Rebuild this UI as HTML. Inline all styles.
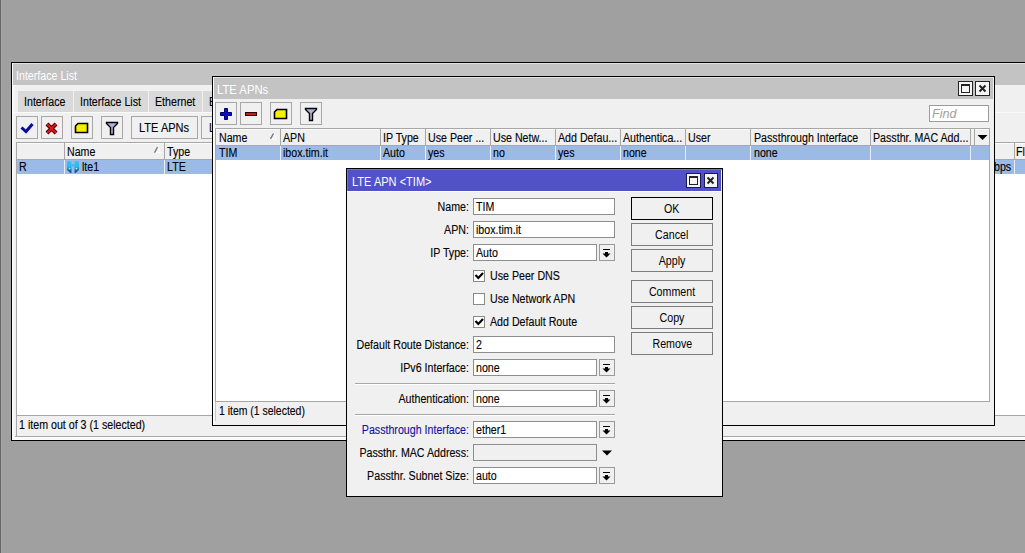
<!DOCTYPE html>
<html><head><meta charset="utf-8">
<style>
*{margin:0;padding:0;box-sizing:border-box}
html,body{width:1025px;height:553px;overflow:hidden}
body{position:relative;background:#a0a0a0;font-family:"Liberation Sans",sans-serif;font-size:11px;color:#000}
.a{position:absolute}
.t{position:absolute;white-space:nowrap;line-height:14px;font-size:12px;-webkit-text-stroke:.12px currentColor;transform:scaleX(.888);transform-origin:0 0}
.w{color:#fff;-webkit-text-stroke:0 !important}
.win{position:absolute;border:1px solid #000;background:#f0f0f0;overflow:hidden}
.tb{position:absolute;background:#c3c3c3}
.btn{position:absolute;border:1px solid #a7a7a7;background:#f0f0f0;width:22px;height:23px}
.tab{position:absolute;background:#d9d9d9;height:21px;top:91px}
.sep{position:absolute;width:1px;background:#a7a7a7}
.sel{position:absolute;background:#9bbbe6}
.inp{position:absolute;border:1px solid #8e8e8e;background:#fff;height:17px}
.dd{position:absolute;border:1px solid #9a9a9a;background:#f0f0f0;width:16px;height:17px}
.lbl{position:absolute;white-space:nowrap;line-height:14px;font-size:12px;-webkit-text-stroke:.12px currentColor;text-align:right;width:200px;left:269px;transform:scaleX(.888);transform-origin:100% 0}
.cb{position:absolute;border:1px solid #8a8a8a;background:#fff;width:12px;height:12px;left:473px}
.db{position:absolute;border:1px solid #7c7c7c;background:#f0f0f0;width:82px;height:23px;left:631px;text-align:center;line-height:22px;font-size:12px}
.db span{display:inline-block;transform:scaleX(.888)}
.tbtn{position:absolute;border:1px solid #222;background:#f4f4f4;width:15px;height:15px}
svg{position:absolute;overflow:visible}
</style></head><body>
<div class="a" style="left:0;top:0;width:1px;height:553px;background:#666"></div>
<div class="a" style="left:1px;top:0;width:1px;height:553px;background:#a8a8a8"></div>

<!-- ============ Interface List ============ -->
<div class="win" style="left:11px;top:62px;width:1100px;height:379px"></div>
<div class="a" style="left:12px;top:63px;width:1100px;height:1px;background:#e2e2e2"></div>
<div class="a" style="left:12px;top:63px;width:1px;height:377px;background:#fafafa"></div><div class="a" style="left:13px;top:85px;width:2px;height:352px;background:#f6f6f6"></div>
<div class="tb" style="left:13px;top:64px;width:1100px;height:21px"></div>
<div class="t w" style="left:16px;top:69px">Interface List</div>

<div class="tab" style="left:18px;width:55px"></div>
<div class="tab" style="left:74px;width:74px"></div>
<div class="tab" style="left:149px;width:53px"></div>
<div class="tab" style="left:203px;width:40px"></div>
<div class="t" style="left:24px;top:95px">Interface</div>
<div class="t" style="left:80px;top:95px">Interface List</div>
<div class="t" style="left:155px;top:95px">Ethernet</div>
<div class="t" style="left:209px;top:95px">EoIP</div>
<div class="a" style="left:13px;top:112px;width:1100px;height:1px;background:#fafafa"></div>

<div class="btn" style="left:16px;top:116px"></div>
<div class="btn" style="left:41px;top:116px"></div>
<div class="btn" style="left:71px;top:116px"></div>
<div class="btn" style="left:101px;top:116px"></div>
<div class="btn" style="left:131px;top:116px;width:67px"></div>
<div class="btn" style="left:201px;top:116px;width:60px"></div>
<div class="t" style="left:139px;top:121px;transform:scaleX(.92)">LTE APNs</div>
<div class="t" style="left:209px;top:121px">LTE</div>
<!-- check -->
<svg style="left:0;top:0" width="1" height="1"><path d="M21.5 127.5 L26 131.5 L32.5 124" fill="none" stroke="#0a0a9a" stroke-width="3"/></svg>
<!-- X -->
<svg style="left:0;top:0" width="1" height="1"><path d="M47 124 L56 133 M56 124 L47 133" fill="none" stroke="#300" stroke-width="4"/><path d="M47 124 L56 133 M56 124 L47 133" fill="none" stroke="#e01818" stroke-width="2"/></svg>
<!-- note -->
<svg style="left:0;top:0" width="1" height="1"><path d="M78 123.5 H87.5 V132.5 H75.5 V126 Z" fill="#f4f000" stroke="#000" stroke-width="1.6"/></svg>
<!-- filter -->
<svg style="left:0;top:0" width="1" height="1"><path d="M106.5 122.5 H117.5 V123.5 L113.5 127.5 V134.5 H110.5 V127.5 L106.5 123.5 Z" fill="#aab4d8" stroke="#000" stroke-width="1.4"/></svg>

<div class="a" style="left:16px;top:142px;width:1100px;height:274px;border:1px solid #a7a7a7;background:#fff"></div>
<div class="a" style="left:17px;top:143px;width:1100px;height:17px;background:#f0f0f0;border-bottom:1px solid #a7a7a7"></div>
<div class="a" style="left:17px;top:143px;width:1100px;height:1px;background:#fcfcfc"></div>
<div class="sep" style="left:64px;top:143px;height:16px"></div>
<div class="sep" style="left:164px;top:143px;height:16px"></div>
<div class="sep" style="left:1014px;top:143px;height:16px"></div>
<div class="sel" style="left:17px;top:160px;width:1100px;height:14px"></div>
<div class="a" style="left:64px;top:160px;width:1px;height:14px;background:#e6eef8"></div>
<div class="a" style="left:164px;top:160px;width:1px;height:14px;background:#e6eef8"></div>
<div class="a" style="left:1014px;top:160px;width:1px;height:14px;background:#e6eef8"></div>
<div class="t" style="left:67px;top:145px">Name</div>
<div class="t" style="left:167px;top:145px">Type</div>
<div class="t" style="left:1016px;top:145px">Flow</div>
<svg style="left:0;top:0" width="1" height="1"><path d="M158 147 L160.5 152.8 H154.5" fill="none" stroke="#fff" stroke-width="1"/><path d="M157.5 147 L154.5 152.8" stroke="#777" stroke-width="1.4"/></svg>
<div class="t" style="left:19px;top:160px">R</div>
<div class="t" style="left:82px;top:160px">lte1</div>
<div class="t" style="left:167px;top:160px">LTE</div>
<div class="t" style="left:994px;top:160px">bps</div>
<!-- lte icon -->
<svg style="left:0;top:0" width="1" height="1">
<defs><linearGradient id="lg" x1="0" y1="0" x2="0" y2="1"><stop offset="0" stop-color="#3cc0f4"/><stop offset=".45" stop-color="#30b8f0"/><stop offset="1" stop-color="#08387a"/></linearGradient></defs>
<path d="M67 162.5 Q67 161 68.5 161 H70 Q71.5 161 71.5 162.5 V169.5 L71.3 173 H70.5 L67 170 Z" fill="url(#lg)"/>
<path d="M79 162.5 Q79 161 77.5 161 H76 Q74.5 161 74.5 162.5 V169.5 L74.7 173 H75.5 L79 170 Z" fill="url(#lg)"/>
<rect x="71.5" y="164" width="3" height="2.5" fill="#38c0f2"/>
<circle cx="69.6" cy="168.6" r=".8" fill="#e0f4ff"/>
<circle cx="76.4" cy="168.6" r=".8" fill="#e0f4ff"/>
</svg>

<div class="a" style="left:16px;top:416px;width:1px;height:20px;background:#a7a7a7"></div>
<div class="a" style="left:15px;top:436px;width:1100px;height:1px;background:#a7a7a7"></div>
<div class="a" style="left:12px;top:437px;width:1100px;height:3px;background:#fbfbfb"></div>
<div class="t" style="left:19px;top:418px">1 item out of 3 (1 selected)</div>

<!-- ============ LTE APNs ============ -->
<div class="win" style="left:212px;top:76px;width:783px;height:350px"></div>
<div class="a" style="left:213px;top:77px;width:781px;height:1px;background:#e2e2e2"></div>
<div class="a" style="left:213px;top:77px;width:1px;height:348px;background:#fcfcfc"></div><div class="a" style="left:214px;top:99px;width:1px;height:325px;background:#f8f8f8"></div>
<div class="tb" style="left:214px;top:78px;width:779px;height:21px"></div>
<div class="t w" style="left:217px;top:83px;transform:scaleX(.94)">LTE APNs</div>
<div class="tbtn" style="left:958px;top:81px"></div>
<div class="tbtn" style="left:975px;top:81px"></div>
<svg style="left:0;top:0" width="1" height="1">
<rect x="961.5" y="84.5" width="8" height="8" fill="none" stroke="#222" stroke-width="1"/><rect x="961" y="84" width="9" height="2" fill="#222"/>
<path d="M979.5 85.5 L985.5 91.5 M985.5 85.5 L979.5 91.5" stroke="#222" stroke-width="2"/>
</svg>

<div class="btn" style="left:215px;top:102px"></div>
<div class="btn" style="left:240px;top:102px"></div>
<div class="btn" style="left:270px;top:102px"></div>
<div class="btn" style="left:300px;top:102px"></div>
<svg style="left:0;top:0" width="1" height="1">
<path d="M224.5 108.5 H227.5 V112.5 H231.5 V115.5 H227.5 V119.5 H224.5 V115.5 H220.5 V112.5 H224.5 Z" fill="#0a0ac8" stroke="#000060" stroke-width="1"/>
<rect x="245.5" y="112.5" width="11" height="3" fill="#c81c1c" stroke="#300" stroke-width="1"/>
<path d="M277 109.5 H286.5 V118.5 H274.5 V112 Z" fill="#f4f000" stroke="#000" stroke-width="1.6"/>
<path d="M305.5 108.5 H316.5 V109.5 L312.5 113.5 V120.5 H309.5 V113.5 L305.5 109.5 Z" fill="#aab4d8" stroke="#000" stroke-width="1.4"/>
</svg>

<div class="inp" style="left:929px;top:105px;width:60px;border-color:#9c9c9c"></div>
<div class="t" style="left:932px;top:107px;font-style:italic;color:#a0a0a0;font-size:13px;transform:scaleX(.97);-webkit-text-stroke:0">Find</div>

<div class="a" style="left:215px;top:128px;width:775px;height:274px;border:1px solid #a7a7a7;background:#fff"></div>
<div class="a" style="left:216px;top:129px;width:773px;height:17px;background:#f0f0f0;border-bottom:1px solid #a7a7a7"></div>
<div class="sel" style="left:216px;top:146px;width:773px;height:14px"></div>
<div class="a" style="left:216px;top:129px;width:773px;height:1px;background:#fcfcfc"></div>
<div class="sep" style="left:280px;top:129px;height:16px"></div>
<div class="sep" style="left:380px;top:129px;height:16px"></div>
<div class="sep" style="left:425px;top:129px;height:16px"></div>
<div class="sep" style="left:490px;top:129px;height:16px"></div>
<div class="sep" style="left:555px;top:129px;height:16px"></div>
<div class="sep" style="left:620px;top:129px;height:16px"></div>
<div class="sep" style="left:685px;top:129px;height:16px"></div>
<div class="sep" style="left:750px;top:129px;height:16px"></div>
<div class="sep" style="left:870px;top:129px;height:16px"></div>
<div class="sep" style="left:970px;top:129px;height:16px"></div>
<div class="sep" style="left:974px;top:129px;height:16px"></div>
<svg style="left:0;top:0" width="1" height="1"><path d="M977.5 135 H987.5 L982.5 140 Z" fill="#000"/>
<path d="M274 133.5 L276.5 139 H270.5" fill="none" stroke="#fff" stroke-width="1"/><path d="M273.5 133.5 L270.5 138.8" stroke="#777" stroke-width="1.4"/></svg>
<div class="a" style="left:280px;top:146px;width:1px;height:14px;background:#e6eef8"></div>
<div class="a" style="left:380px;top:146px;width:1px;height:14px;background:#e6eef8"></div>
<div class="a" style="left:425px;top:146px;width:1px;height:14px;background:#e6eef8"></div>
<div class="a" style="left:490px;top:146px;width:1px;height:14px;background:#e6eef8"></div>
<div class="a" style="left:555px;top:146px;width:1px;height:14px;background:#e6eef8"></div>
<div class="a" style="left:620px;top:146px;width:1px;height:14px;background:#e6eef8"></div>
<div class="a" style="left:685px;top:146px;width:1px;height:14px;background:#e6eef8"></div>
<div class="a" style="left:750px;top:146px;width:1px;height:14px;background:#e6eef8"></div>
<div class="a" style="left:870px;top:146px;width:1px;height:14px;background:#e6eef8"></div>
<div class="a" style="left:970px;top:146px;width:1px;height:14px;background:#e6eef8"></div>
<div class="t" style="left:219px;top:131px">Name</div>
<div class="t" style="left:283px;top:131px">APN</div>
<div class="t" style="left:383px;top:131px">IP Type</div>
<div class="t" style="left:428px;top:131px">Use Peer ...</div>
<div class="t" style="left:493px;top:131px">Use Netw...</div>
<div class="t" style="left:558px;top:131px">Add Defau...</div>
<div class="t" style="left:623px;top:131px">Authentica...</div>
<div class="t" style="left:688px;top:131px">User</div>
<div class="t" style="left:754px;top:131px">Passthrough Interface</div>
<div class="t" style="left:873px;top:131px">Passthr. MAC Add...</div>
<div class="t" style="left:219px;top:146px">TIM</div>
<div class="t" style="left:283px;top:146px">ibox.tim.it</div>
<div class="t" style="left:383px;top:146px">Auto</div>
<div class="t" style="left:428px;top:146px">yes</div>
<div class="t" style="left:493px;top:146px">no</div>
<div class="t" style="left:558px;top:146px">yes</div>
<div class="t" style="left:623px;top:146px">none</div>
<div class="t" style="left:754px;top:146px">none</div>
<div class="a" style="left:215px;top:402px;width:1px;height:19px;background:#c8c8c8"></div>
<div class="t" style="left:219px;top:404px;transform:scaleX(.87)">1 item (1 selected)</div>

<!-- ============ Dialog ============ -->
<div class="win" style="left:346px;top:168px;width:377px;height:329px"></div>
<div class="a" style="left:347px;top:169px;width:375px;height:1px;background:#7474d4"></div>
<div class="a" style="left:347px;top:169px;width:1px;height:22px;background:#7474d4"></div>
<div class="a" style="left:348px;top:170px;width:373px;height:21px;background:#5252c8"></div>
<div class="a" style="left:347px;top:191px;width:375px;height:1px;background:#fff"></div>
<div class="t w" style="left:352px;top:175px;transform:scaleX(.92)">LTE APN &lt;TIM&gt;</div>
<div class="tbtn" style="left:686px;top:173px;border-color:#1a1a50"></div>
<div class="tbtn" style="left:704px;top:173px;width:14px;border-color:#1a1a50"></div>
<svg style="left:0;top:0" width="1" height="1">
<rect x="689.5" y="176.5" width="8" height="8" fill="none" stroke="#222" stroke-width="1"/><rect x="689" y="176" width="9" height="2" fill="#222"/>
<path d="M707.5 177.5 L713.5 183.5 M713.5 177.5 L707.5 183.5" stroke="#222" stroke-width="2"/>
</svg>

<div class="lbl" style="top:200px">Name:</div>
<div class="inp" style="left:473px;top:198px;width:142px"></div>
<div class="t" style="left:476px;top:200px">TIM</div>
<div class="lbl" style="top:223px">APN:</div>
<div class="inp" style="left:473px;top:221px;width:142px"></div>
<div class="t" style="left:476px;top:223px">ibox.tim.it</div>
<div class="lbl" style="top:246px">IP Type:</div>
<div class="inp" style="left:473px;top:244px;width:124px"></div>
<div class="dd" style="left:599px;top:244px"></div>
<div class="t" style="left:476px;top:246px">Auto</div>

<div class="cb" style="top:270px"></div>
<div class="t" style="left:490px;top:269px">Use Peer DNS</div>
<div class="cb" style="top:293px"></div>
<div class="t" style="left:490px;top:292px">Use Network APN</div>
<div class="cb" style="top:316px"></div>
<div class="t" style="left:490px;top:315px">Add Default Route</div>
<svg style="left:0;top:0" width="1" height="1">
<path d="M475.5 275 L478.3 278 L483 273" fill="none" stroke="#000" stroke-width="2.2"/>
<path d="M475.5 321 L478.3 324 L483 319" fill="none" stroke="#000" stroke-width="2.2"/>
</svg>

<div class="lbl" style="top:338px">Default Route Distance:</div>
<div class="inp" style="left:473px;top:336px;width:142px"></div>
<div class="t" style="left:476px;top:338px">2</div>
<div class="lbl" style="top:361px">IPv6 Interface:</div>
<div class="inp" style="left:473px;top:359px;width:124px"></div>
<div class="dd" style="left:599px;top:359px"></div>
<div class="t" style="left:476px;top:361px">none</div>

<div class="a" style="left:355px;top:383px;width:260px;height:1px;background:#a7a7a7"></div>
<div class="a" style="left:355px;top:384px;width:260px;height:1px;background:#fff"></div>
<div class="lbl" style="top:392px">Authentication:</div>
<div class="inp" style="left:473px;top:390px;width:124px"></div>
<div class="dd" style="left:599px;top:390px"></div>
<div class="t" style="left:476px;top:392px">none</div>
<div class="a" style="left:355px;top:414px;width:260px;height:1px;background:#a7a7a7"></div>
<div class="a" style="left:355px;top:415px;width:260px;height:1px;background:#fff"></div>

<div class="lbl" style="top:423px;color:#1010a8">Passthrough Interface:</div>
<div class="inp" style="left:473px;top:421px;width:124px"></div>
<div class="dd" style="left:599px;top:421px"></div>
<div class="t" style="left:476px;top:423px">ether1</div>
<div class="lbl" style="top:446px">Passthr. MAC Address:</div>
<div class="inp" style="left:473px;top:444px;width:124px;background:#f0f0f0"></div>
<div class="lbl" style="top:469px">Passthr. Subnet Size:</div>
<div class="inp" style="left:473px;top:467px;width:124px"></div>
<div class="dd" style="left:599px;top:467px"></div>
<div class="t" style="left:476px;top:469px">auto</div>
<svg style="left:0;top:0" width="1" height="1">
<g fill="#000">
<rect x="603" y="249" width="7" height="1"/><path d="M605 252 H608 V253.5 H610.5 L606.5 257.5 L602.5 253.5 H605 Z"/>
<rect x="603" y="364" width="7" height="1"/><path d="M605 367 H608 V368.5 H610.5 L606.5 372.5 L602.5 368.5 H605 Z"/>
<rect x="603" y="395" width="7" height="1"/><path d="M605 398 H608 V399.5 H610.5 L606.5 403.5 L602.5 399.5 H605 Z"/>
<rect x="603" y="426" width="7" height="1"/><path d="M605 429 H608 V430.5 H610.5 L606.5 434.5 L602.5 430.5 H605 Z"/>
<rect x="603" y="472" width="7" height="1"/><path d="M605 475 H608 V476.5 H610.5 L606.5 480.5 L602.5 476.5 H605 Z"/>
<path d="M602 450.5 H612 L607 455.5 Z"/>
</g>
</svg>

<div class="db" style="top:197px;border-color:#000"><span>OK</span></div>
<div class="db" style="top:223px"><span>Cancel</span></div>
<div class="db" style="top:249px"><span>Apply</span></div>
<div class="db" style="top:280px"><span>Comment</span></div>
<div class="db" style="top:306px"><span>Copy</span></div>
<div class="db" style="top:332px"><span>Remove</span></div>

</body></html>
